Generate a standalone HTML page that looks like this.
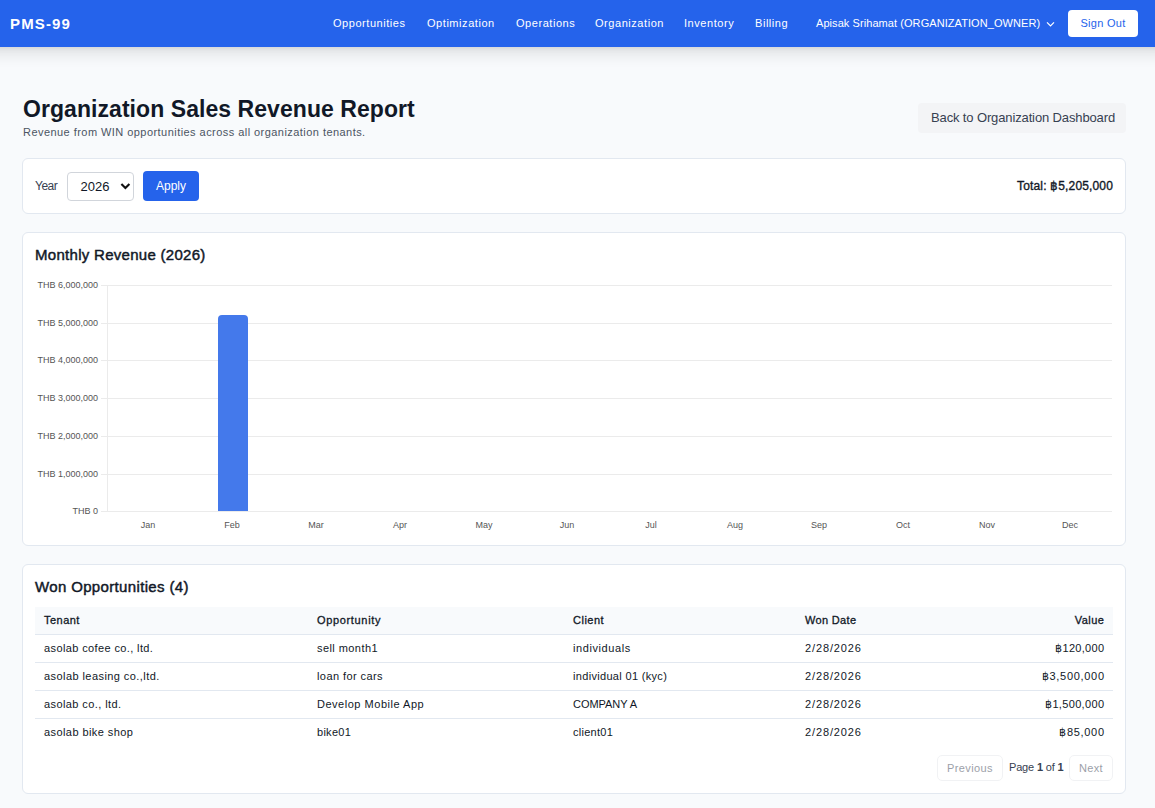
<!DOCTYPE html>
<html>
<head>
<meta charset="utf-8">
<style>
*{box-sizing:border-box;margin:0;padding:0}
html,body{width:1155px;height:808px;overflow:hidden}
body{font-family:"Liberation Sans",sans-serif;background:#f8fafc;color:#111827;position:relative}
.abs{position:absolute;white-space:nowrap}
nav{position:absolute;left:0;top:0;width:1155px;height:47px;z-index:2}
nav:before{content:"";position:absolute;left:-30px;top:0;width:1215px;height:47px;background:#2563eb;box-shadow:0 10px 15px -3px rgba(0,0,0,.1),0 4px 6px -4px rgba(0,0,0,.1)}
body{overflow:hidden}
.logo{left:10px;top:15px;font-size:15px;font-weight:bold;color:#fff;line-height:18px;letter-spacing:1.15px}
.nl{top:17px;font-size:11px;color:#fff;line-height:13px;letter-spacing:0.55px}
.signout{left:1068px;top:10px;width:70px;height:27px;background:#fff;border-radius:4px;color:#2563eb;font-size:11px;line-height:27px;text-align:center;letter-spacing:0.3px}
.card{position:absolute;left:22px;width:1104px;background:#fff;border:1px solid #e2e8f0;border-radius:6px}
h1{position:absolute;left:23px;top:95px;font-size:23px;letter-spacing:0.06px;line-height:28px;font-weight:bold;color:#111827;white-space:nowrap}
.sub{left:23px;top:125px;font-size:11px;line-height:14px;color:#4b5563;letter-spacing:0.45px}
.back{left:918px;top:103px;width:208px;height:30px;background:#f3f4f6;border-radius:4px;font-size:13px;line-height:30px;text-align:center;color:#374151;letter-spacing:-0.13px;padding-left:2px}
.lbl{font-size:12px;color:#374151}
.sel{left:67px;top:172px;width:67px;height:29px;border:1px solid #d1d5db;border-radius:4px;background:#fff;font-size:13px;line-height:27px;padding-left:12.5px;color:#111827}
.apply{left:143px;top:171px;width:56px;height:30px;background:#2563eb;border-radius:4px;color:#fff;font-size:12px;line-height:30px;text-align:center}
.total{right:42px;top:179px;font-size:12px;line-height:14px;color:#111827;-webkit-text-stroke:0.35px #111827;letter-spacing:0.15px}
.ct{left:35px;font-size:15px;line-height:18px;color:#111827;-webkit-text-stroke:0.45px #111827}
.yl{font-size:9px;line-height:10px;color:#555;text-align:right;width:80px;left:18px}
.xl{font-size:9px;line-height:10px;color:#555;text-align:center;width:40px;top:520px}
.grid{position:absolute;left:101px;width:1011px;height:1px;background:#ebebeb}
.th{top:614px;font-size:11px;line-height:13px;color:#111827;-webkit-text-stroke:0.3px #111827}
.td{font-size:11px;line-height:13px;color:#111827}
.dt{letter-spacing:0.4px}
.row{position:absolute;left:35px;width:1078px;height:1px;background:#e2e8f0}
.pbtn{position:absolute;height:26px;border:1px solid #e5e7eb;border-radius:5px;font-size:11px;letter-spacing:0.37px;line-height:24px;color:#374151;text-align:center;background:#fff;opacity:.5}
</style>
</head>
<body>
<nav>
  <div class="abs logo">PMS-99</div>
  <div class="abs nl" style="left:333px">Opportunities</div>
  <div class="abs nl" style="left:427px">Optimization</div>
  <div class="abs nl" style="left:516px">Operations</div>
  <div class="abs nl" style="left:595px">Organization</div>
  <div class="abs nl" style="left:684px">Inventory</div>
  <div class="abs nl" style="left:755px">Billing</div>
  <div class="abs nl" style="left:816px;letter-spacing:0.07px">Apisak Srihamat (ORGANIZATION_OWNER)</div>
  <svg class="abs" style="left:1045.5px;top:20px" width="9" height="8" viewBox="0 0 9 8"><path d="M1 2.4 L4.5 5.9 L8 2.4" stroke="#fff" stroke-width="1.2" fill="none"/></svg>
  <div class="abs signout">Sign Out</div>
</nav>

<h1>Organization Sales Revenue Report</h1>
<div class="abs sub">Revenue from WIN opportunities across all organization tenants.</div>
<div class="abs back">Back to Organization Dashboard</div>

<div class="card" style="top:158px;height:56px"></div>
<div class="abs lbl" style="left:35px;top:179px;letter-spacing:-0.5px">Year</div>
<div class="abs sel">2026</div>
<svg class="abs" style="left:120px;top:182px" width="11" height="8" viewBox="0 0 11 8"><path d="M1.4 2 L5.4 6 L9.4 2" stroke="#111" stroke-width="2.1" fill="none"/></svg>
<div class="abs apply">Apply</div>
<div class="abs total">Total: ฿5,205,000</div>

<div class="card" style="top:232px;height:314px"></div>
<div class="abs ct" style="top:246px;letter-spacing:0.29px">Monthly Revenue (2026)</div>
<div class="grid" style="top:285px"></div>
<div class="grid" style="top:323px"></div>
<div class="grid" style="top:360px"></div>
<div class="grid" style="top:398px"></div>
<div class="grid" style="top:436px"></div>
<div class="grid" style="top:474px"></div>
<div class="grid" style="top:511px"></div>
<div style="position:absolute;left:107px;top:285px;width:1px;height:226px;background:#ebebeb"></div>
<div class="abs yl" style="top:280px">THB 6,000,000</div>
<div class="abs yl" style="top:318px">THB 5,000,000</div>
<div class="abs yl" style="top:355px">THB 4,000,000</div>
<div class="abs yl" style="top:393px">THB 3,000,000</div>
<div class="abs yl" style="top:431px">THB 2,000,000</div>
<div class="abs yl" style="top:469px">THB 1,000,000</div>
<div class="abs yl" style="top:506px">THB 0</div>
<div style="position:absolute;left:218px;top:315px;width:30px;height:196px;background:#4479eb;border-radius:4px 4px 0 0"></div>
<div class="abs xl" style="left:128px">Jan</div>
<div class="abs xl" style="left:212px">Feb</div>
<div class="abs xl" style="left:296px">Mar</div>
<div class="abs xl" style="left:380px">Apr</div>
<div class="abs xl" style="left:464px">May</div>
<div class="abs xl" style="left:547px">Jun</div>
<div class="abs xl" style="left:631px">Jul</div>
<div class="abs xl" style="left:715px">Aug</div>
<div class="abs xl" style="left:799px">Sep</div>
<div class="abs xl" style="left:883px">Oct</div>
<div class="abs xl" style="left:967px">Nov</div>
<div class="abs xl" style="left:1050px">Dec</div>

<div class="card" style="top:564px;height:230px"></div>
<div class="abs ct" style="top:578px;letter-spacing:0.35px">Won Opportunities (4)</div>
<div style="position:absolute;left:35px;top:607px;width:1078px;height:27px;background:#f8fafc"></div>
<div class="row" style="top:634px"></div>
<div class="row" style="top:662px"></div>
<div class="row" style="top:690px"></div>
<div class="row" style="top:718px"></div>
<div class="abs th" style="left:44px;letter-spacing:0.48px">Tenant</div>
<div class="abs th" style="left:317px;letter-spacing:0.66px">Opportunity</div>
<div class="abs th" style="left:573px;letter-spacing:0.5px">Client</div>
<div class="abs th" style="left:805px;letter-spacing:0.34px">Won Date</div>
<div class="abs th" style="right:50.50px;letter-spacing:0.5px">Value</div>

<div class="abs td" style="left:44px;top:642px;letter-spacing:0.38px">asolab cofee co., ltd.</div>
<div class="abs td" style="left:317px;top:642px;letter-spacing:0.43px">sell month1</div>
<div class="abs td" style="left:573px;top:642px;letter-spacing:0.58px">individuals</div>
<div class="abs td" style="left:805px;top:642px;letter-spacing:0.88px">2/28/2026</div>
<div class="abs td" style="right:50.71px;top:642px;letter-spacing:0.29px">฿120,000</div>

<div class="abs td" style="left:44px;top:670px;letter-spacing:0.43px">asolab leasing co.,ltd.</div>
<div class="abs td" style="left:317px;top:670px;letter-spacing:0.42px">loan for cars</div>
<div class="abs td" style="left:573px;top:670px;letter-spacing:0.32px">individual 01 (kyc)</div>
<div class="abs td" style="left:805px;top:670px;letter-spacing:0.88px">2/28/2026</div>
<div class="abs td" style="right:50.31px;top:670px;letter-spacing:0.69px">฿3,500,000</div>

<div class="abs td" style="left:44px;top:698px;letter-spacing:0.41px">asolab co., ltd.</div>
<div class="abs td" style="left:317px;top:698px;letter-spacing:0.52px">Develop Mobile App</div>
<div class="abs td" style="left:573px;top:698px;letter-spacing:-0.03px">COMPANY A</div>
<div class="abs td" style="left:805px;top:698px;letter-spacing:0.88px">2/28/2026</div>
<div class="abs td" style="right:50.67px;top:698px;letter-spacing:0.33px">฿1,500,000</div>

<div class="abs td" style="left:44px;top:726px;letter-spacing:0.42px">asolab bike shop</div>
<div class="abs td" style="left:317px;top:726px;letter-spacing:0.28px">bike01</div>
<div class="abs td" style="left:573px;top:726px;letter-spacing:0.27px">client01</div>
<div class="abs td" style="left:805px;top:726px;letter-spacing:0.88px">2/28/2026</div>
<div class="abs td" style="right:50.32px;top:726px;letter-spacing:0.68px">฿85,000</div>

<div class="pbtn" style="left:937px;top:755px;width:66px">Previous</div>
<div class="abs td" style="left:1009px;top:761px;letter-spacing:-0.17px;color:#374151">Page <b>1</b> of <b>1</b></div>
<div class="pbtn" style="left:1069px;top:755px;width:44px">Next</div>
</body>
</html>
